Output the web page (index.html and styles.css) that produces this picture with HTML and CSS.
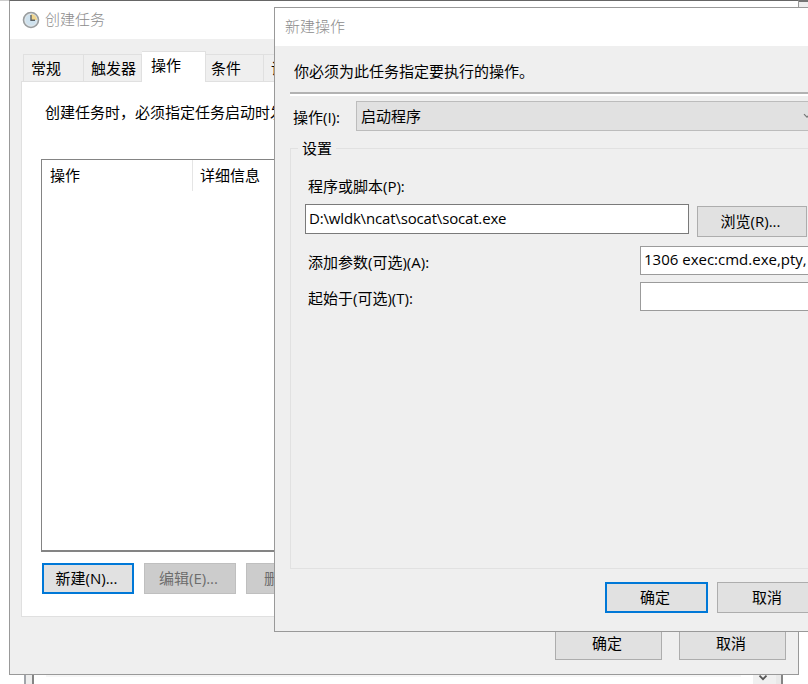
FILE: index.html
```html
<!DOCTYPE html>
<html lang="zh-CN">
<head>
<meta charset="utf-8">
<title>创建任务</title>
<link rel="stylesheet" href="styles.css">
</head>
<body>
<div class="desktop">
  <div class="back-top"></div>
  <div class="back-bottom">
    <div class="back-shadow"></div>
    <div class="back-scroll"><svg width="10" height="6" viewBox="0 0 10 6"><path d="M1.5 .7 5 4.2 8.5.7" fill="none" stroke="#555" stroke-width="1.8"/></svg></div>
  </div>

  <section class="window task">
    <header class="titlebar">
      <svg class="clock" width="18" height="18" viewBox="0 0 18 18">
        <circle cx="9" cy="9" r="7.5" fill="#c5d2d9" stroke="#9a9d9e" stroke-width="1.6"/>
        <circle cx="9" cy="9" r="6" fill="#cfe2ee" stroke="#e6eaec" stroke-width=".8"/>
        <path d="M9 9V3a6 6 0 0 1 6 6Z" fill="#f0d58d"/>
        <path d="M9 4v5.3h4" fill="none" stroke="#5c6367" stroke-width="1.4"/>
      </svg>
      <span>创建任务</span>
    </header>
    <nav class="tabs">
      <span class="tab general">常规</span>
      <span class="tab trigger">触发器</span>
      <span class="tab active">操作</span>
      <span class="tab condition">条件</span>
      <span class="tab">设</span>
    </nav>
    <div class="panel">
      <p class="hint">创建任务时，必须指定任务启动时发</p>
      <div class="list">
        <span class="col first">操作</span>
        <span class="col">详细信息</span>
      </div>
      <div class="actions">
        <button class="btn default">新建(N)...</button>
        <button class="btn" disabled>编辑(E)...</button>
        <button class="btn delete" disabled>删</button>
      </div>
    </div>
    <footer class="task-footer">
      <button class="btn">确定</button>
      <button class="btn">取消</button>
    </footer>
  </section>

  <section class="window action">
    <header class="titlebar"><span>新建操作</span></header>
    <p class="message">你必须为此任务指定要执行的操作。</p>
    <div class="rule"></div>
    <div class="kind">
      <label>操作(I):</label>
      <div class="combo"><span>启动程序</span><svg width="8" height="6" viewBox="0 0 8 6"><path d="M1 1.2 4 4.2 7 1.2" fill="none" stroke="#777" stroke-width="1.2"/></svg></div>
    </div>
    <fieldset class="group">
      <legend>设置</legend>
      <label class="program-label">程序或脚本(P):</label>
      <div class="program">
        <div class="field path">D:\wldk\ncat\socat\socat.exe</div>
        <button class="btn browse">浏览(R)...</button>
      </div>
      <div class="row args"><label>添加参数(可选)(A):</label><div class="field">1306 exec:cmd.exe,pty,</div></div>
      <div class="row"><label>起始于(可选)(T):</label><div class="field"></div></div>
    </fieldset>
    <footer class="action-footer">
      <button class="btn default">确定</button>
      <button class="btn">取消</button>
    </footer>
  </section>
</div>
</body>
</html>
```

FILE: styles.css
```css
* { box-sizing: border-box; }
body {
  margin: 0;
  background: #fff;
  color: #000;
  font: 15px/20px "Open Sans", "Noto Sans CJK SC", sans-serif;
}
p { margin: 0; }
.desktop { position: relative; width: 808px; height: 684px; overflow: hidden; }

.back-top {
  position: absolute; left: 0; top: 0; width: 808px; height: 7px;
  border-top: 2px solid #747474; background: #eee;
}
.back-top::before {
  content: ""; position: absolute; left: 0; top: -2px; width: 9px; height: 9px;
  background: #fff; border-top: 1px solid #ccc;
}
.back-bottom {
  position: absolute; left: 24px; top: 674px; width: 759px; height: 10px;
  display: flex; justify-content: space-between;
  border-left: 2px solid #a2a5aa; border-right: 2px solid #858585;
}
.back-bottom::before { content: ""; width: 6px; background: #eee; border-right: 2px solid #858585; }
.back-shadow { flex: 1; height: 3px; margin: 0 12px; background: #f6f6f6; }
.back-scroll { width: 28px; background: #f0f0f0; padding-left: 5px; line-height: 0; border-right: 5px solid #e9e9e9; padding-top: 1px; }

.window { position: absolute; border: 1px solid #999; background: #efefef; overflow: hidden; }
.task { left: 9px; top: 0; width: 790px; height: 675px; border-top-color: #666; }
.action { left: 274px; top: 7px; width: 560px; height: 625px; }
.titlebar { height: 38px; background: #fff; color: #8c8c8c; display: flex; align-items: center; font-weight: 300; }
.titlebar span { padding-bottom: 2px; }
.task .titlebar { padding-left: 12px; }
.clock { margin-right: 5px; }
.action .titlebar { padding-left: 10px; }

.tabs { display: flex; align-items: flex-end; height: 30px; margin: 12px 0 0 13px; }
.tab { height: 27px; border: solid #e0e0e0; border-width: 1px 1px 0 0; padding: 3px 7px; white-space: nowrap; }
.tab.general { width: 61px; border-left-width: 1px; }
.tab.trigger { width: 58px; }
.tab.active {
  position: relative; z-index: 1; width: 64px; height: 31px; margin-bottom: -1px;
  padding: 3px 9px; background: #fff;
}
.tab.condition { width: 58px; padding-left: 5px; }
.panel { margin: 0 11px; height: 536px; border: 1px solid #e0e0e0; background: #fff; padding: 20px 19px 0; }
.hint { padding-left: 4px; white-space: nowrap; }
.list { height: 393px; margin-top: 37px; border: 2px solid #848484; display: flex; align-items: flex-start; border-width: 1px 1px 2px; }
.col { height: 31px; padding: 5px 7px; }
.col.first { width: 151px; border-right: 1px solid #e5e5e5; padding-left: 8px; }
.actions { display: flex; gap: 10px; margin: 11px 0 0 1px; }
.btn {
  height: 31px; padding: 0 3px 2px 0; border: 1px solid #adadad; background: #e1e1e1; color: #000;
  font: inherit; text-align: center;
}
.btn.default { border: 2px solid #0078d7; }
.btn:disabled { background: #ccc; border-color: #bfbfbf; color: #6d6d6d; }
.actions .btn { width: 92px; }
.actions .delete { padding-left: 17px; text-align: left; }
.task-footer { display: flex; gap: 17px; justify-content: flex-end; padding: 11px 12px 0; }
.task-footer .btn { width: 107px; height: 32px; }

.message { margin: 15px 0 0 19px; }
.rule { margin: 11px 0 0 15px; height: 4px; border-top: 2px solid #b2b2b2; border-bottom: 2px solid #fff; }
.kind { display: flex; margin: 5px 0 0 18px; }
.kind label { width: 63px; padding-top: 6px; }
.combo {
  display: flex; justify-content: space-between; align-items: center; width: 476px; height: 30px;
  border: 1px solid #bcbcbc; background: #e1e1e1; padding: 0 20px 0 4px;
}
.group { height: 431px; margin: 7px 0 0 15px; padding: 0 0 0 14px; border: 1px solid #e1e1e1; min-width: 0; }
.group legend { margin-left: -7px; padding: 0 4px; height: 20px; }
.program-label { display: block; margin: 18px 0 0 3px; }
.program { display: flex; margin-top: 8px; }
.field { height: 30px; border: 1px solid #9b9b9b; background: #fff; padding: 3px; white-space: nowrap; }
.path { width: 384px; border-color: #7a7a7a; letter-spacing: -.17px; }
.browse { width: 110px; margin: 2px 0 0 8px; }
.row { display: flex; margin: 7px 0 0 3px; }
.row.args { margin-top: 9px; }
.row label { flex: 0 0 332px; padding-top: 6px; }
.row .field { flex: 0 0 200px; height: 29px; padding-top: 2px; }
.action-footer { display: flex; gap: 9px; margin: 13px 0 0 330px; }
.action-footer .btn { width: 103px; }
```
